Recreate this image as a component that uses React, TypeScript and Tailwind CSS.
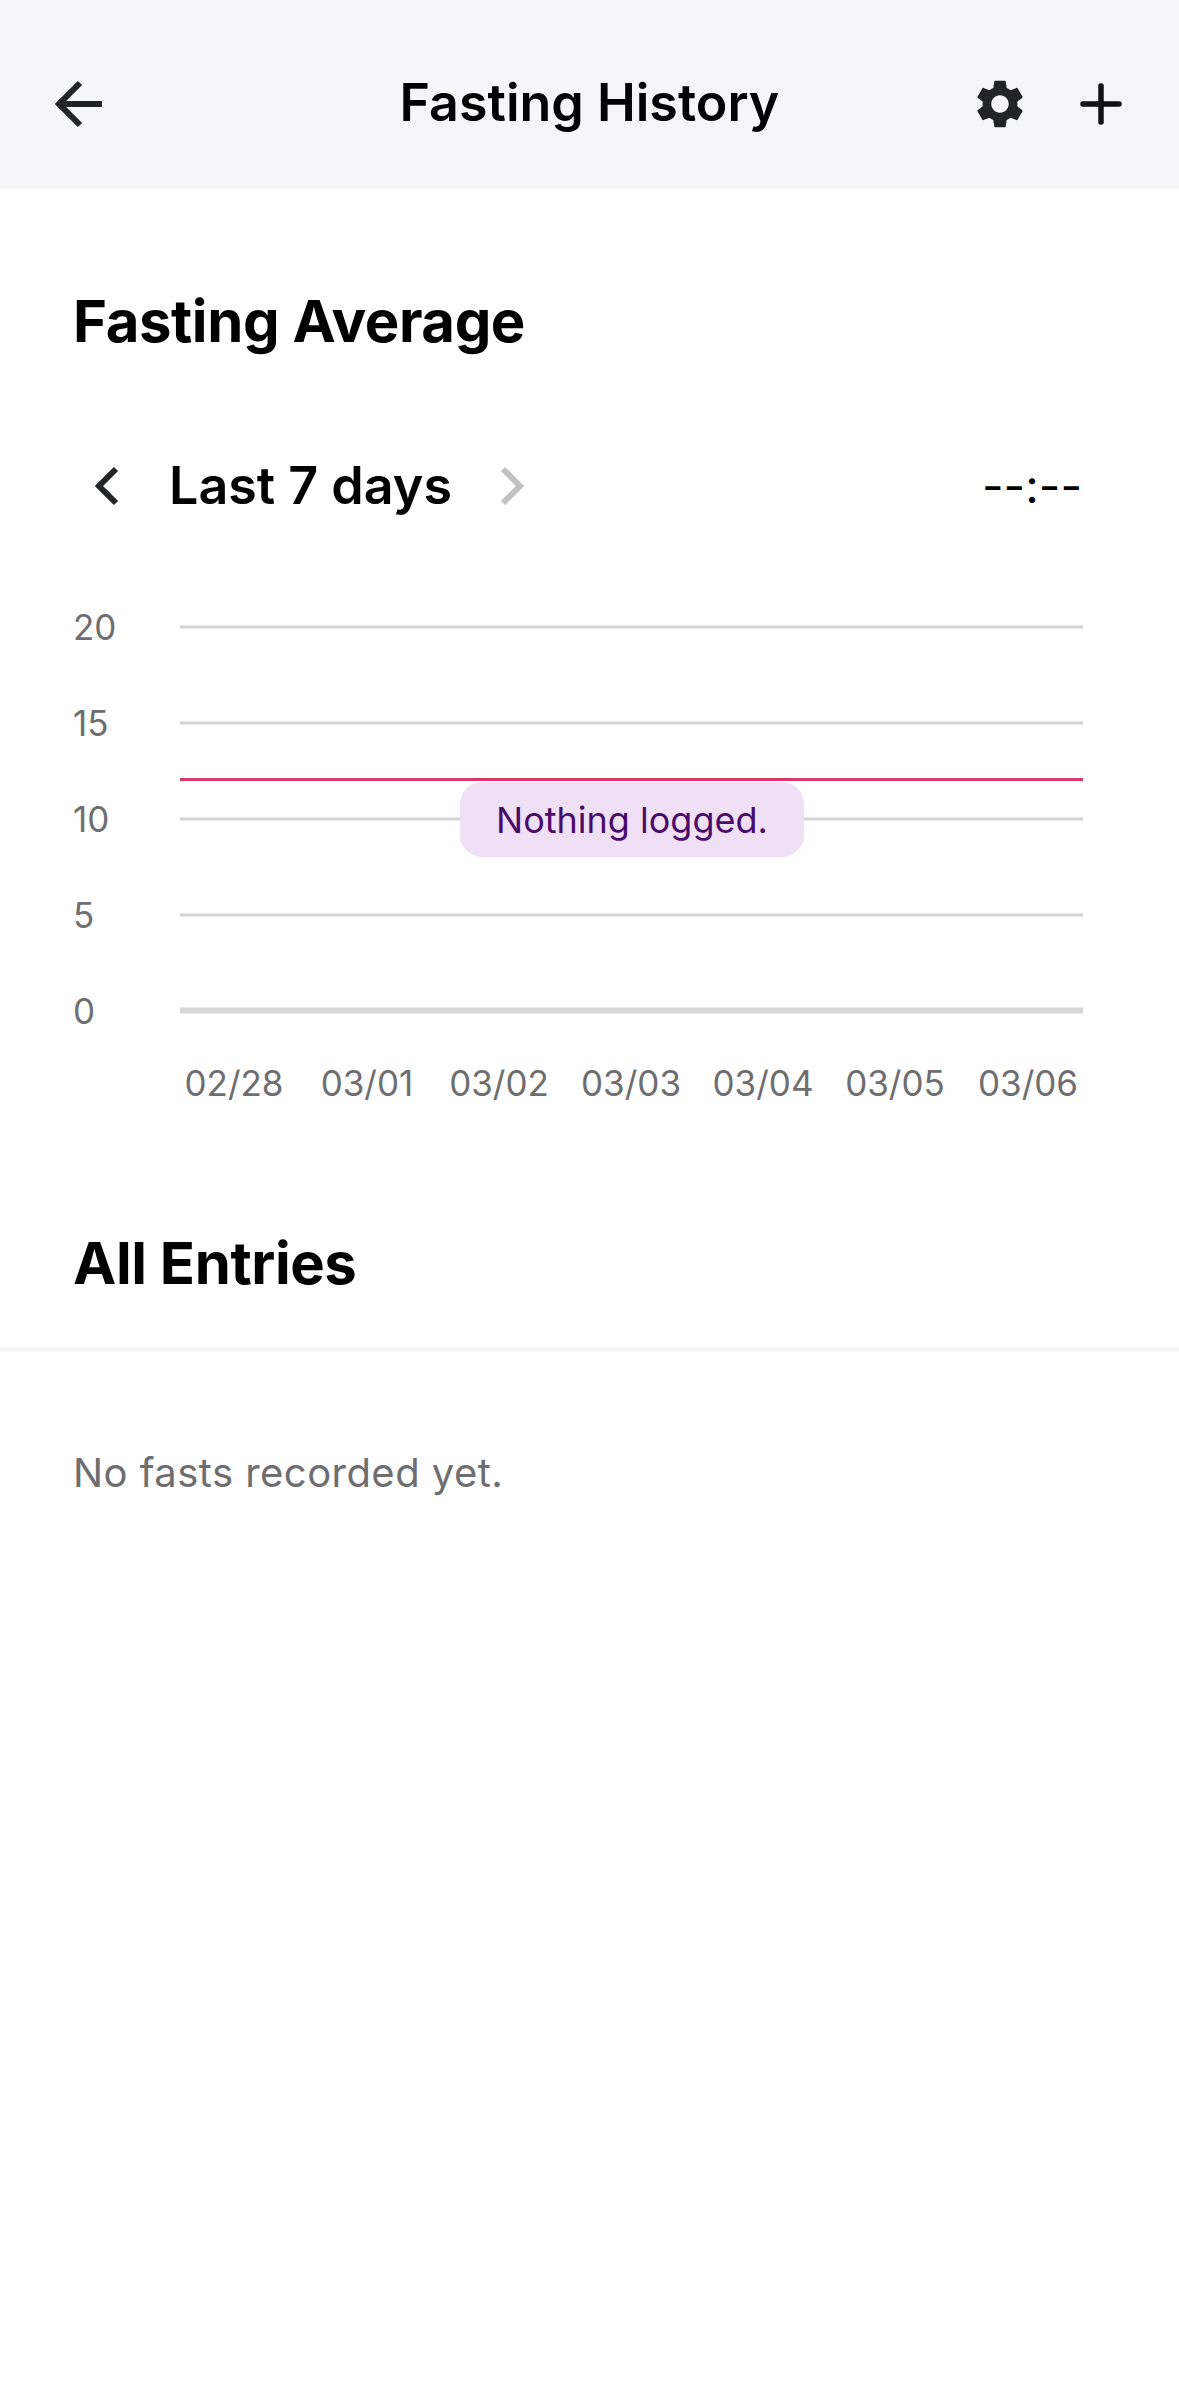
import { MdSettings } from "react-icons/md";

const lines = [627, 723, 819, 915];
const ticks = ["20", "15", "10", "5", "0"];
const dates = [
  ["02/28", 234],
  ["03/01", 367],
  ["03/02", 499],
  ["03/03", 631],
  ["03/04", 763],
  ["03/05", 895],
  ["03/06", 1028],
] as const;

function Chart() {
  return (
    <div className="relative h-[533px] w-full">
      <svg width="1179" height="533" viewBox="0 582 1179 533" className="block">
        {lines.map((y) => (
          <line key={y} x1="180" x2="1083" y1={y} y2={y} stroke="#d4d4d6" strokeWidth="3" />
        ))}
        <line x1="180" x2="1083" y1="1010.5" y2="1010.5" stroke="#d6d6d8" strokeWidth="6" />
        <line x1="180" x2="1083" y1="779.5" y2="779.5" stroke="#d63a68" strokeWidth="3" />
        {ticks.map((t, i) => (
          <text key={t} x="73" y={627 + i * 96 + 13} fill="#6e6e70" fontSize="35" fontFamily="Inter, sans-serif">
            {t}
          </text>
        ))}
        {dates.map(([d, x]) => (
          <text key={d} x={x} y="1096" textAnchor="middle" fill="#6e6e70" fontSize="35" fontFamily="Inter, sans-serif">
            {d}
          </text>
        ))}
      </svg>
      <div className="absolute left-[460px] top-[200px] flex h-[75px] w-[344px] items-center justify-center rounded-[22px] bg-[#f0e0f5] text-[36px] text-[#4a0a6a]">
        Nothing logged.
      </div>
    </div>
  );
}

export default function App() {
  return (
    <div className="min-h-[2396px] w-[1179px] bg-white font-['Inter',sans-serif] text-black">
      <header className="relative flex h-[189px] items-center justify-between bg-[#f6f6f9] pl-[54px] pr-[57px] pt-[18px]">
        <svg width="48" height="48" viewBox="0 0 48 48" fill="none" stroke="#222426" strokeWidth="6" strokeLinecap="butt" strokeLinejoin="miter">
          <path d="M4 24H48M26 3L5 24L26 45" />
        </svg>
        <h1 className="absolute inset-x-0 -mt-[2px] text-center text-[52px] font-semibold">Fasting History</h1>
        <div className="flex items-center gap-[51px]">
          <MdSettings className="h-[58px] w-[58px] text-[#222426]" />
          <svg width="42" height="42" viewBox="0 0 42 42" fill="none" stroke="#111" strokeWidth="5.5" strokeLinecap="round">
            <path d="M21 3V39M3 21H39" />
          </svg>
        </div>
      </header>

      <section className="pl-[73px] pr-[97px] pt-[97px]">
        <h2 className="text-[58px] font-bold leading-[70px] tracking-[-0.4px]">Fasting Average</h2>
        <div className="mt-[95px] flex h-[70px] items-center justify-between">
          <div className="flex items-center">
            <svg className="ml-[21px]" width="26" height="40" viewBox="0 0 26 40" fill="none" stroke="#222426" strokeWidth="6">
              <path d="M22 3L5 20L22 37" />
            </svg>
            <span className="ml-[49px] text-[52px] font-semibold">Last 7 days</span>
            <svg className="ml-[47px]" width="26" height="40" viewBox="0 0 26 40" fill="none" stroke="#c2c2c2" strokeWidth="6">
              <path d="M4 3L21 20L4 37" />
            </svg>
          </div>
          <span className="text-[47px]">--:--</span>
        </div>
      </section>

      <div className="mt-[61px]">
        <Chart />
      </div>

      <section className="pt-[113px]">
        <h2 className="px-[73px] text-[58px] font-bold leading-[70px] tracking-[-0.4px]">All Entries</h2>
        <div className="mt-[49px] h-[5px] bg-[#f6f6f6]" />
        <p className="px-[73px] pt-[97px] text-[40px] leading-[48px] tracking-[0.45px] text-[#6e6e70]">No fasts recorded yet.</p>
      </section>
    </div>
  );
}
